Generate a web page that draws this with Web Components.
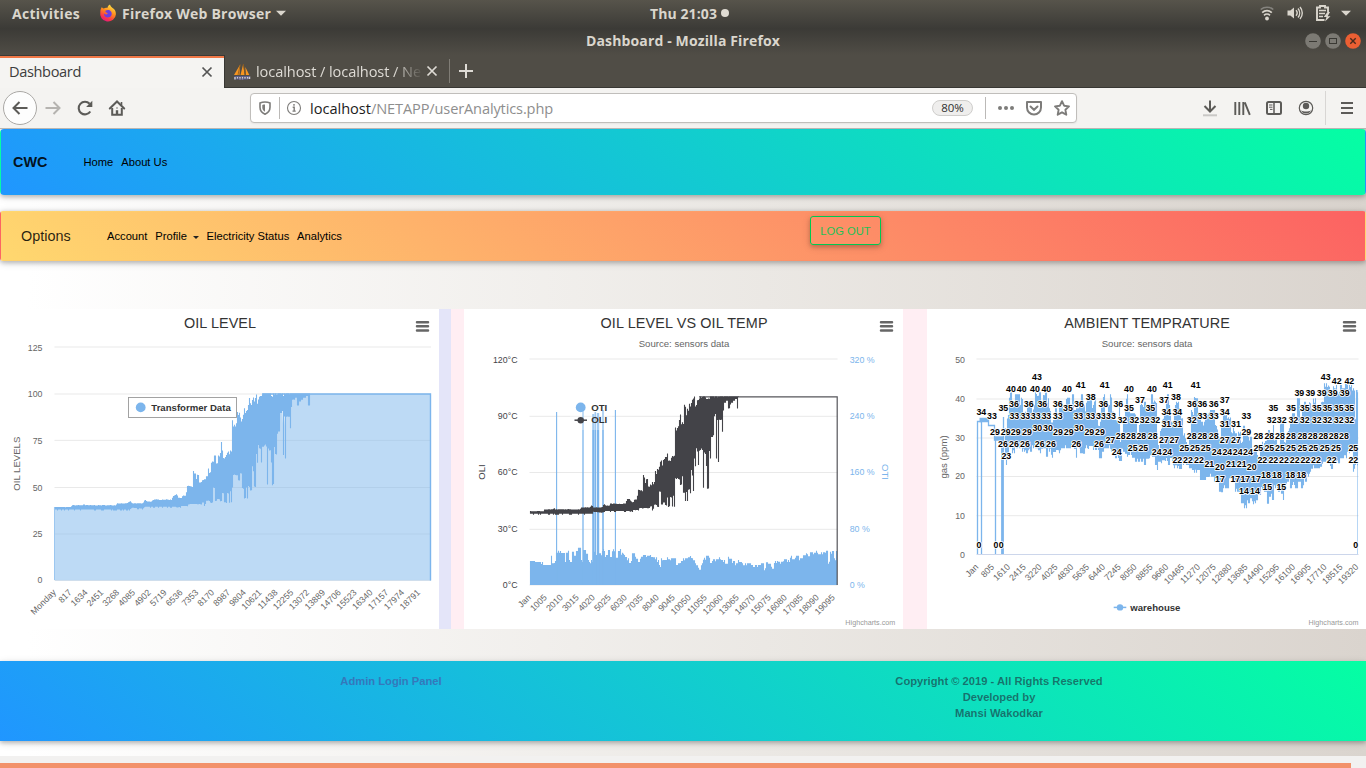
<!DOCTYPE html>
<html lang="en">
<head>
<meta charset="utf-8">
<title>Dashboard</title>
<style>
html,body{margin:0;padding:0;height:100%;overflow:hidden}
body{font-family:"Liberation Sans",Arial,sans-serif;font-size:11.2px;color:#000}
</style>
</head>
<body>
<desktop-shell></desktop-shell>
<script>
const define = (name, css, html, setup) => {
  const tpl = document.createElement('template');
  tpl.innerHTML = '<style>' + css + '</style>' + html;
  customElements.define(name, class extends HTMLElement {
    connectedCallback() {
      if (this.shadowRoot) return;
      this.attachShadow({mode: 'open'}).appendChild(tpl.content.cloneNode(true));
      if (setup) setup.call(this, this.shadowRoot);
    }
  });
};

/* Text spaced to an exact width */
define('fit-text', ':host{display:block;white-space:nowrap;flex:none;line-height:20px}span{display:inline-block}', '<span><slot></slot></span>', function (root) {
  const w = +this.getAttribute('w');
  const s = root.querySelector('span');
  const n = this.textContent.length;
  const nat = s.getBoundingClientRect().width;
  s.style.letterSpacing = ((w - nat) / n) + 'px';
  this.style.width = w + 'px';
});

const ICONS = {
  back: '<path d="M17.500 10H3.500M9.500 4 3.500 10l6 6" stroke-width="2"/>',
  forward: '<path d="M2.500 10h14M10.500 4l6 6-6 6" stroke-width="2"/>',
  reload: '<path d="M15.300 13.500A6.300 6.300 0 1 1 14.600 5.800" stroke-width="2.100"/><path d="M17.300 2.800v6.200h-6.200z" fill="currentColor" stroke="none"/>',
  home: '<path d="M2.800 10.500 10 3.500l7.200 7" stroke-width="2" stroke-linecap="round"/><path d="M5.200 10v6.800h9.600V10" stroke-width="2"/><path d="M14.500 4v3" stroke-width="1.600"/><path d="M10 12.200V17" stroke-width="2.400"/><path d="M10 9.500v1" stroke-width="1.500"/>',
  shield: '<path d="M10 4c2 0 3.700.4 5 1v4.300c0 3.200-2 5.600-5 6.900-3-1.300-5-3.700-5-6.900V5c1.300-.6 3-1 5-1z" stroke-width="1.600"/><path d="M10 6.500c-1 0-1.800.1-2.700.4v2.600c0 1.900 1 3.300 2.700 4.300z" fill="currentColor" stroke="none"/>',
  info: '<circle cx="10" cy="10" r="6.500" stroke-width="1.100"/><path d="M8.700 9.200h1.500v3.600M8.500 13.100h3.200M10 6v1.700" stroke-width="1.400"/>',
  dots: '<g fill="currentColor" stroke="none"><circle cx="4" cy="10" r="2"/><circle cx="10" cy="10" r="2"/><circle cx="16" cy="10" r="2"/></g>',
  pocket: '<path d="M3 4h14v5.500a7 7 0 0 1-14 0z" stroke-width="2" stroke-linejoin="round"/><path d="m6.500 8.500 3.500 3.300 3.500-3.300" stroke-width="2" stroke-linecap="round"/>',
  star: '<path d="m10 3.200 2.100 4.500 4.900.7-3.600 3.400.9 4.900-4.300-2.400-4.300 2.400.9-4.900L3 8.400l4.900-.7z" stroke-width="1.900" stroke-linejoin="round"/>',
  download: '<path d="M10 2.500v11M4.500 8l5.500 5.500L15.500 8" stroke-width="2"/><path d="M3 17.300h14" stroke="#c9c8c6" stroke-width="2"/>',
  library: '<path d="M3.300 4v13M7.300 4v13M11.300 4v13M12.800 4.300l5 12.500" stroke-width="1.900"/>',
  sidebar: '<rect x="3" y="4" width="14" height="12" rx="1.500" stroke-width="2"/><path d="M10 4v12" stroke-width="1.500"/><path d="M5 7h3.500M5 9.200h3.500M6 11.400h2.500" stroke-width="1"/>',
  account: '<circle cx="10" cy="10" r="6.700" stroke-width="1.200"/><circle cx="10" cy="8" r="3.200" fill="currentColor" stroke="none"/><path d="M5 12.300c1.500 1 3 1.300 5 1.300s3.500-.3 5-1.300c-.8 2-2.600 3.300-5 3.300S5.800 14.300 5 12.300z" fill="currentColor" stroke="none"/>',
  menu: '<path d="M4 5h12M4 10h12M4 15h12" stroke-width="2"/>',
  close: '<path d="m5.500 5.500 9 9m0-9-9 9" stroke-width="1.700"/>',
  plus: '<path d="M10 3v14M3 10h14" stroke-width="2"/>',
  wifi: '<path d="M3.700 6.500a10 10 0 0 1 12.600 0" stroke="#85837e" stroke-width="1.600"/><path d="M5.200 9.600a7 7 0 0 1 9.600 0M7 12.300a4.400 4.400 0 0 1 6 0" stroke-width="1.700"/><circle cx="10" cy="15.500" r="1.900" fill="currentColor" stroke="none"/>',
  volume: '<path d="M2.500 7.600h2.800L9 4.400v11.200l-3.700-3.200H2.500z" fill="currentColor" stroke="none"/><path d="M11 7.300a4 4 0 0 1 0 5.400M13 5.500a7 7 0 0 1 0 9M15 4a9 9 0 0 1 0 12" stroke-width="1.400"/>',
  battery: '<path d="M11.500 17H4V4.500h3V3h5v1.500h3V9" stroke-width="1.900"/><path d="M6 7.500h7M6 10.500h6M6 13.500h4" stroke-width="1.300"/><path d="m14.500 9-3.800 5h2.800L12 18.500l5.500-5.300h-2.800L17 9z" fill="currentColor" stroke="none"/>',
  caret: '<path d="M5 7.700h10l-5 5z" fill="currentColor" stroke="none"/>',
  firefox: '<defs><linearGradient id="f" x1=".8" y1="0" x2=".3" y2="1"><stop offset="0" stop-color="#fff04a"/><stop offset=".45" stop-color="#ff8a1d"/><stop offset=".8" stop-color="#f8334c"/><stop offset="1" stop-color="#e31587"/></linearGradient></defs><path d="M9.300 5C10 3 11 2 12 1.600c.3 1.700 1.500 2.300 2.600 3.500 2 .8 3.300 3.300 3.300 6.100A7.900 7.900 0 1 1 2.300 9c0-2 .7-3.700 1.700-5 .3 1 .9 1.400 1.700 1.500C7 4.800 8.300 4.700 9.300 5z" fill="url(#f)" stroke="none"/><path d="M7.800 7.600c2-1 4.500-.6 5.500 1.500 1.200 2.700-.5 5.500-3.400 5.500-2.600 0-4.200-2-4-4 .7.900 1.700 1.100 2.700.9 1.300-.3 1.500-1.300.3-1.700-1.500-.3-2-1.200-1.100-2.200z" fill="#6b3ee0" stroke="none"/>',
  mysql: '<path d="M2 14 8.200 3.500 7.500 14zM8.500 14l2.700-11 1.300 11zM13.300 6l4 8h-3.300z" fill="#f79521" stroke="none"/><path d="M8.200 3.500 6 14M11.200 3l2.300 11" stroke="#8a5a20" stroke-width=".8"/><path d="M3 16v2.500M5.500 15v3M8 16v2.500M10.500 15v3.500M13 15.500v2.500M15.500 15v3M17.500 15.500V18" stroke="#c9c9e0" stroke-width="1.500"/><path d="M2.500 15.500h15M4 18h12" stroke="#5a5a90" stroke-width=".9"/>'
};
define('ui-icon', ':host{display:block;flex:none;width:20px;height:20px}svg{display:block;width:20px;height:20px}', '<svg viewBox="0 0 20 20" fill="none" stroke="currentColor"></svg>', function (root) {
  root.querySelector('svg').innerHTML = ICONS[this.getAttribute('name')];
});

define('system-bar', `
:host{display:flex;align-items:center;height:28px;background:linear-gradient(#57544b,#3c3b37);color:#dad6cd;
 font:700 14px "Open Sans","Noto Sans",sans-serif;box-sizing:border-box;padding-left:12px}
.dot{width:8px;height:8px;border-radius:50%;background:#dfdbd2;margin:-2px 0 0 4px;flex:none}
fit-text{margin-top:-1px}ui-icon{color:#dad6cd;margin-top:-2px}`,
`<fit-text w="68">Activities</fit-text><ui-icon name="firefox" style="margin-left:18px"></ui-icon><fit-text w="149" style="margin-left:4px">Firefox Web Browser</fit-text>
<ui-icon name="caret" style="margin-left:0"></ui-icon><fit-text w="67" style="margin-left:359px">Thu 21:03</fit-text><i class="dot"></i>
<ui-icon name="wifi" style="margin-left:528px"></ui-icon><ui-icon name="volume" style="margin-left:8px"></ui-icon><ui-icon name="battery" style="margin-left:8px"></ui-icon><ui-icon name="caret" style="margin-left:3px"></ui-icon>`);

define('title-bar', `
:host{display:grid;grid-template-columns:1fr auto 1fr;align-items:center;height:27px;background:linear-gradient(#3b3a36,#504d46);color:#dad6cd;font:700 14px "Open Sans","Noto Sans",sans-serif;box-sizing:border-box;padding-bottom:2px}
.b{display:flex;justify-content:flex-end;gap:4px;padding-right:5px}
.b svg{width:16px;height:16px;display:block}`,
`<span></span><fit-text w="194">Dashboard - Mozilla Firefox</fit-text><div class="b">
<svg viewBox="0 0 16 16"><circle cx="8" cy="8" r="7.800" fill="#7c7a74"/><path d="M4 8.500h8" stroke="#3a3934"/></svg>
<svg viewBox="0 0 16 16"><circle cx="8" cy="8" r="7.800" fill="#7c7a74"/><rect x="4.500" y="5.500" width="7" height="5" fill="none" stroke="#3a3934"/></svg>
<svg viewBox="0 0 16 16"><circle cx="8" cy="8" r="7.800" fill="#ec5f33"/><path d="m5.300 5.300 5.400 5.400m0-5.400-5.400 5.400" stroke="#4a2a1c" stroke-width="1.400"/></svg></div>`);

define('tab-strip', `
:host{display:flex;height:33px;background:#504d46;font:14.6px "Open Sans","Noto Sans",sans-serif;box-sizing:border-box}
.on{width:224px;box-sizing:border-box;border-top:2px solid #f07746;background:#f5f4f2;color:#3d3d3d;display:flex;align-items:center;margin-top:1px;padding:0 0 2px 9px;box-shadow:0 -1px #3b3a36}
.on fit-text{margin-top:-2px}
.rest{flex:1;display:flex;align-items:center;border-bottom:1px solid #383733;border-left:1px solid #383733;color:#dedbd5;padding-left:7px}
.rest fit-text{-webkit-mask-image:linear-gradient(90deg,#000 84%,transparent 101%);mask-image:linear-gradient(90deg,#000 84%,transparent 101%)}
.sep{width:1px;height:24px;background:#807d76;margin-left:7px}`,
`<div class="on"><fit-text w="72">Dashboard</fit-text><ui-icon name="close" style="margin-left:116px;color:#555"></ui-icon></div>
<div class="rest"><ui-icon name="mysql"></ui-icon><fit-text w="165" style="margin-left:4px">localhost / localhost / Ne</fit-text><ui-icon name="close" style="margin-left:1px"></ui-icon><i class="sep"></i><ui-icon name="plus" style="margin-left:6px"></ui-icon></div>`);

define('nav-toolbar', `
:host{display:flex;align-items:center;height:41px;background:#f4f3f1;border-bottom:1px solid #b9b6b2;box-sizing:border-box;color:#5c5b58;font:14.6px "Open Sans","Noto Sans",sans-serif;padding-left:3px}
.back{width:32px;height:32px;border:1px solid #aaa8a5;border-radius:50%;background:#fdfdfd;display:grid;place-items:center;flex:none}
.url{display:flex;align-items:center;box-sizing:border-box;width:827px;height:30px;background:#fff;border:1px solid #c0bebb;border-radius:4px;margin-left:123px;padding-left:4px;color:#7d7c7a;box-shadow:0 1px 2px rgba(0,0,0,.06)}
.url>ui-icon[name=info]{margin-left:4px}
.v{width:1px;height:22px;background:#bbb9b7}
.zoom{box-sizing:border-box;width:41px;height:16px;border:1px solid #cfcecc;border-radius:9px;background:#efeeed;color:#2e2e2e;font-size:11.5px;line-height:14px;text-align:center;margin-left:379px}
.host{color:#1c1c1c}.path{color:#8e8e8e}
.tools{display:flex;align-items:center;gap:12px;margin-left:123px}`,
`<div class="back"><ui-icon name="back"></ui-icon></div><ui-icon name="forward" style="margin-left:6px;color:#b5b3b0"></ui-icon><ui-icon name="reload" style="margin-left:12px"></ui-icon><ui-icon name="home" style="margin-left:12px"></ui-icon>
<div class="url"><ui-icon name="shield"></ui-icon><i class="v" style="margin-left:4px"></i><ui-icon name="info"></ui-icon><fit-text class="host" w="61" style="margin-left:6px">localhost</fit-text><fit-text class="path" w="182">/NETAPP/userAnalytics.php</fit-text>
<div class="zoom">80%</div><i class="v" style="margin-left:12px"></i><ui-icon name="dots" style="margin-left:10px"></ui-icon><ui-icon name="pocket" style="margin-left:8px"></ui-icon><ui-icon name="star" style="margin-left:8px"></ui-icon></div>
<div class="tools"><ui-icon name="download"></ui-icon><ui-icon name="library"></ui-icon><ui-icon name="sidebar"></ui-icon><ui-icon name="account"></ui-icon></div><i class="v" style="height:34px;margin-left:9px;background:#d8d6d4"></i><ui-icon name="menu" style="margin-left:11px"></ui-icon>`);

const SHADOW = 'box-shadow:0 1.6px 4px rgba(0,0,0,.2),0 1.6px 8px rgba(0,0,0,.14);';
define('site-nav', `
:host{display:flex;align-items:center;box-sizing:border-box;height:66px;border:1px solid transparent;border-radius:4px;background-image:linear-gradient(40deg,#2096ff,#05ffa3);${SHADOW}padding-left:12px}
b{font-size:14.4px;color:rgba(0,0,0,.9);width:70.4px}nav{display:flex;gap:8px}`,
`<b>CWC</b><nav><span>Home</span><span>About Us</span></nav>`);
define('option-nav', `
:host{display:flex;align-items:center;box-sizing:border-box;height:50px;border:1px solid transparent;border-radius:3px;background-image:linear-gradient(40deg,#ffd86f,#fc6262);${SHADOW}padding-left:20px;margin-top:16px}
b{font-weight:400;font-size:14.4px;color:rgba(0,0,0,.85);width:86px}nav{display:flex;gap:7.800px;width:703px}
.c{display:inline-block;border:3px solid transparent;border-top-color:#222;border-bottom:0;margin-left:5.800px;vertical-align:1.500px}
.out{align-self:flex-start;margin-top:4px;box-sizing:border-box;width:71px;height:29px;border:1.600px solid #00c851;border-radius:3px;color:#1fbf55;display:grid;place-items:center;box-shadow:0 2px 4px rgba(0,0,0,.18),0 2px 8px rgba(0,0,0,.13)}`,
`<b>Options</b><nav><span>Account</span><span>Profile<i class="c"></i></span><span>Electricity Status</span><span>Analytics</span></nav><div class="out">LOG OUT</div>`);
define('site-footer', `
:host{display:grid;grid-template-columns:782px 434px;box-sizing:border-box;height:80px;margin-top:32px;padding-top:12px;background:linear-gradient(40deg,#2096ff,#05ffa3);${SHADOW}font-weight:700;line-height:16px;text-align:center}
a{color:#3478bb}p{margin:0;color:rgba(30,30,50,.58)}`,
`<a>Admin Login Panel</a><p>Copyright © 2019 - All Rights Reserved<br>Developed by<br>Mansi Wakodkar</p>`);

/* ---- chart helpers ---- */
let seed = 7;
const rnd = () => (seed = (seed * 16807) % 2147483647) / 2147483647;
const interp = (p, x) => {
  for (let i = 1; i < p.length; i++) if (x <= p[i][0]) {
    const a = p[i - 1], b = p[i];
    return a[1] + (b[1] - a[1]) * Math.max(0, x - a[0]) / (b[0] - a[0]);
  }
  return p[p.length - 1][1];
};
const near = (p, x) => p.reduce((m, q) => Math.abs(q[0] - x) < Math.abs(m[0] - x) ? q : m)[1];
const parse = (s, fx, fy) => s.trim().split(/\s+/).map(t => t.split(':').map(Number)).map(([a, b]) => [fx(a), fy(b)]);
const id = v => v;
const txt = (x, y, t, o = '') => `<text x="${x}" y="${y}" ${o}>${t}</text>`;
const slant = (labels, x0, step, y) => labels.map((l, i) => `<text text-anchor="end" transform="translate(${(x0 + step * i).toFixed(1)} ${y}) rotate(-45)">${l}</text>`).join('');
const grid = (ys, x1, x2) => ys.map(y => `<path d="M${x1} ${y}H${x2}" stroke="#e6e6e6" stroke-width=".9"/>`).join('');
const burger = x => `<path d="M${x} 322.200h11M${x} 326.300h11M${x} 330.400h11" stroke="#666" stroke-width="2.500" stroke-linecap="round"/>`;
const steps = (first, d, n) => [first, ...Array.from({length: n}, (_, i) => d * (i + 1))];
const OIL_TOP = parse('54:39 71:39 72:40 83:40 84:41 85:40 116:40 117:41 128:41 129:42 131:42 132:41 143:41 145:43 147:42 152:42 153:43 172:43 173:45 177:46 178:44 185:45 186:47 188:50 191:50 192:50 193:58.5 195:57 196:54 198:56 200:52 203:53 205:54 207:55 208:60 210:58 211:62 213:63 215:66 217:63 218:66 220:67 221:73 222:69 224:65 226:66 228:68 231:69 232:86 233:83 236:83 238:89 241:86 243:87 244:94 246:91 248:93 250:96 252:95 254:97 256:99 258:96 260:98 262:100 431:100', id, id);
const OIL_LOW = parse('54:38 130:38 132:39 143:38.5 145:39.500 176:39.500 177:39 184:40 192:41 200:41 203:42 204:40 205:41 207:43 212:42 214:50 216:43 218:44 221:43 223:47 225:42 228:47 229:42 230:48 231:42 232:50 233:57 237:57 239:54 241:58 243:50 245:45 246:50 247:45 249:51 251:49 252:62 253:59 255:51 256:68 257:64 258:73 260:71 261:64 262:72 265:73 266:72 267:52 268:71 270:70 271:64 272:52 273:52 274:72 276:68 277:79 279:80 280:90 281:90 282:91 283:68 284:88 285:65.5 286:88 289:88 290:82 291:93 293:97 296:98 298:94 300:96 302:97 304:98 307:99 309:94 310:100 431:100', id, id);
const band = (map, yf, x0, x1) => {
  let d = '';
  for (let x = x0; x < x1; x++) {
    const u = map(x + .5);
    if (u > 310) break;
    const flat = u < 180;
    const t = flat ? interp(OIL_TOP, u) : near(OIL_TOP, u), l = flat ? interp(OIL_LOW, u) : near(OIL_LOW, u);
    const j = (rnd() - .5) * Math.min(4, (t - l) * .1);
    const drop = flat ? (rnd() > .7 ? 1 : 0) : Math.abs(j);
    d += `M${x + .5} ${(yf(l) + drop).toFixed(1)}V${(yf(Math.min(100, t + j)) - .6).toFixed(1)}`;
  }
  return d;
};
const CHART_CSS = ':host{display:block;flex:none;width:439px;height:320px;background:#fff}svg{display:block;width:439px;height:320px;font-family:"Liberation Sans",Arial,sans-serif;font-size:8.8px;fill:#666}.t{font-size:14.4px;fill:#333;text-anchor:middle}.s{font-size:9.6px;text-anchor:middle}.e{text-anchor:end}.l{font-size:9.6px;font-weight:700;fill:#333}.h{font-size:7.2px;fill:#999;text-anchor:end}.d{font-weight:700;fill:#000;text-anchor:middle;stroke:#fff;stroke-width:1.7px;paint-order:stroke;stroke-linejoin:round}.o{fill:#7cb5ec}.k{fill:#434348}';

define('oil-level-chart', CHART_CSS, '<svg viewBox="0 309 439 320"></svg>', function (root) {
  const y = v => 580.4 - v * 1.864;
  let area = 'M55 580.400';
  for (let x = 55; x <= 431; x++) area += `L${x} ${(y(x < 308 ? (interp(OIL_LOW, x) + interp(OIL_TOP, x)) / 2 : 100)).toFixed(1)}`;
  area += 'V580.4z';
  root.querySelector('svg').innerHTML =
    txt(220, 328, 'OIL LEVEL', 'class="t" textLength="72"') + burger(417) +
    grid([347, 394, 440.4, 487.5, 534, 580.4], 54.500, 431) +
    `<path d="${area}" fill="#7cb5ec" fill-opacity=".5"/>` +
    `<path d="${band(id, y, 54, 310)}" stroke="#7cb5ec" stroke-width="1.100"/><path d="M262 394H430.500V580.400" fill="none" stroke="#7cb5ec" stroke-width="1.400" /><path d="M54.500 508V580" stroke="#9cc7f0"/>` +
    [[125, 351], [100, 397], [75, 443.500], [50, 491], [25, 537], [0, 583]].map(([t, b]) => txt(42.500, b, t, 'class="e"')).join('') +
    `<text class="s" transform="translate(20 463.700) rotate(-90)">OIL LEVELS</text>` +
    slant(steps('Monday', 817, 23), 56.500, 15.830, 593) +
    `<rect x="128.500" y="397.500" width="108" height="20" fill="#fff" stroke="#999" stroke-width=".9"/><circle cx="140.700" cy="407.400" r="4.900" fill="#7cb5ec"/>` +
    txt(151.300, 411, 'Transformer Data', 'class="l"');
});

define('oil-temp-chart', CHART_CSS, '<svg viewBox="464 309 439 320"></svg>', function (root) {
  const y = v => 585.2 - v * 1.882, fy = v => 305 + v / 3;
  const a = parse('210:768 240:771 255:780 272:780 274:752 278:775 285:768 290:737 312:738 316:765 322:737 330:765 340:740 345:752 350:738 360:728 366:765 372:735 382:740 388:765 392:775 396:765 400:740 410:750 420:745 432:732 440:750 447:735 452:750 462:733 470:752 480:732 485:743 490:740 495:750 505:760 510:768 520:745 530:755 537:765 545:755 555:750 565:752 575:750 585:757 595:765 600:780 605:760 615:765 625:757 635:760 645:760 650:780 655:775 665:768 675:760 690:757', v => 460 + v / 3, fy)
    .concat(parse('1:753 10:760 20:775 30:788 38:775 42:758 55:752 65:768 75:763 88:757 98:765 110:770 120:755 130:768 138:775 150:765 160:775 175:775 190:780 205:780 220:775 224:790 230:772 240:770 247:785 255:768 270:770 285:763 295:765 303:752 310:757 320:752 335:760 345:745 355:748 365:742 380:737 390:742 400:742 412:737 418:770 422:740 430:738 436:760 440:738', v => 690 + v / 3, fy));
  let cols = '';
  for (let x = 530; x < 837; x++) cols += `M${x + .5} 585V${(near(a, x + .5) + (x > 540 ? (rnd() > .6 ? 2 : 0) : 0)).toFixed(1)}`;
  const line = (x, t, w) => `<path d="M${x} 585V${t}" stroke="#7cb5ec" stroke-width="${w}"/>`;
  const map = x => 54.5 + (x - 530) * 376.5 / 307.5;
  root.querySelector('svg').innerHTML =
    txt(684, 328, 'OIL LEVEL VS OIL TEMP', 'class="t" textLength="167"') + txt(684, 347, 'Source: sensors data', 'class="s"') + burger(881) +
    grid([359, 416.300, 472.500, 529.300, 585], 529.500, 837.500) +
    `<path d="${cols}" stroke="#7cb5ec" stroke-width="1.100"/>` +
    line(556.600, 412, 1.100) + line(583, 411, 1.300) + line(593.300, 414, 2.200) + line(595.300, 412, 1.600) + line(598, 413, 2.400) + line(603, 410, 1.600) + line(615.400, 410, 1.100) +
    `<path d="${band(map, y, 530, 740)}" stroke="#434348" stroke-width="1.100"/><path d="M699 396.900H837.200V585" fill="none" stroke="#434348" stroke-width="1.200" stroke-opacity=".9"/>` +
    '<rect x="570" y="400" width="42" height="30" fill="#fff" fill-opacity=".3"/>' +
    '<circle cx="580.700" cy="407.400" r="4.900" fill="#7cb5ec"/><path d="M574.500 420.200h12.500" stroke="#434348" stroke-width="1.500"/><circle cx="580.700" cy="420.200" r="3.200" fill="#434348"/>' +
    txt(591.300, 411, 'OTI', 'class="l"') + txt(591.300, 423.300, 'OLI', 'class="l"') +
    [['120°C', 363], ['90°C', 419], ['60°C', 475], ['30°C', 532], ['0°C', 588]].map(([t, b]) => txt(517.500, b, t, 'class="e k"')).join('') +
    [['320 %', 363], ['240 %', 419], ['160 %', 475], ['80 %', 532], ['0 %', 588]].map(([t, b]) => txt(849.700, b, t, 'class="o"')).join('') +
    '<text class="s k" transform="translate(485 472) rotate(-90)">OLI</text><text class="s o" transform="translate(882 472) rotate(90)">OTI</text>' +
    slant(steps('Jan', 1005, 19), 531.500, 16, 598) + txt(895.300, 625, 'Highcharts.com', 'class="h"');
});

define('ambient-chart', CHART_CSS, '<svg viewBox="927 309 439 320"></svg>', function (root) {
  const fy = v => 305 + v / 3, fa = v => 925 + v / 3, fb = v => 1140 + v / 3;
  const top = parse('237:395 243:370 249:330 252:275 257:262 262:280 268:300 274:268 282:268 286:300 290:278 296:325 303:320 308:300 312:290 318:298 322:330 328:300 334:262 344:262 349:300 356:270 365:262 368:280 375:310 378:340 385:345 392:310 398:330 405:300 412:290 418:310 425:278 435:278 437:310 444:268 450:315 457:310 466:290 470:268 475:300 482:310 486:280 490:268 497:285 505:300 510:280 515:330 523:350 530:290 537:268 545:330 550:300 557:268 562:320 570:345 580:345 582:300 590:400 595:345 602:310 606:268 612:320 620:325 632:325 640:400 645:345 648:290', fa, fy)
    .concat(parse('1:300 10:300 15:290 22:310 28:310 35:268 42:280 48:290 52:400 58:420 62:370 68:340 75:310 82:268 90:300 98:350 105:300 112:290 120:310 125:340 132:385 138:400 145:440 150:400 155:315 160:330 166:268 172:280 178:320 190:350 197:340 205:315 222:315 230:360 238:400 245:350 250:320 262:330 270:330 275:370 282:365 290:385 300:380 305:410 315:362 320:375 330:395 340:440 345:430 355:450 362:430 370:410 375:405 385:375 395:385 400:360 405:400 415:420 422:350 428:340 435:400 445:370 452:325 460:325 468:350 475:280 482:330 488:300 495:290 502:310 508:290 515:310 522:280 532:300 540:310 548:290 555:235 565:240 575:260 585:240 595:260 602:240 612:250 620:235 630:240 642:250 645:335 650:255 654:255', fb, fy));
  const low = parse('237:435 240:465 245:480 249:465 255:430 267:445 272:430 285:430 297:440 305:445 318:440 325:430 335:430 345:445 352:440 358:430 365:455 370:430 375:440 382:458 388:450 395:435 405:445 410:430 420:430 440:430 450:432 454:458 458:430 470:445 475:455 482:430 495:432 515:435 527:460 532:440 540:430 550:430 560:440 565:460 575:460 580:468 590:468 592:440 605:455 615:450 625:458 635:470', fa, fy)
    .concat(parse('1:470 10:470 15:480 22:470 30:460 40:455 48:480 52:495 58:470 70:475 80:468 87:480 95:468 105:490 125:492 128:480 135:470 142:480 150:490 160:495 165:503 175:495 185:525 205:525 210:515 220:515 225:530 235:530 240:560 248:562 252:550 265:550 270:520 283:530 288:560 300:560 308:595 317:610 325:595 332:580 340:598 352:595 358:570 365:555 375:560 385:605 390:575 400:585 405:550 418:560 425:575 430:585 435:545 445:530 452:550 460:540 470:550 480:530 488:550 495:530 505:515 515:500 525:490 535:490 545:485 552:470 565:475 575:492 585:470 595:475 605:460 615:460 625:440 630:445 637:440 641:500 648:480 654:490', fb, fy));
  let d = '';
  for (let x = 1004; x < 1358; x++) d += `M${x + .5} ${(near(low, x + .5) - (rnd() > .7 ? 3 : 0)).toFixed(1)}V${(near(top, x + .5) + (rnd() > .6 ? 5 * rnd() : 0)).toFixed(1)}`;
  const A = [[43,216,'336'],[40,252,'258 290 330 364 426 612'],[41,240,'467 539'],[38,276,'497'],[37,285,'645'],[36,297,'267 311 352 398 462 535 580'],[35,309,'235 429 612'],[34,321,'169'],[33,333,'201 268 301 332 364 398 460 496 528 558'],[32,345,'592 628 659'],[30,369,'337 369 462'],[29,381,'210 242 272 306 399 431 493 525'],[28,393,'587 618 649'],[27,405,'556'],[26,417,'234 267 300 344 378 454 522'],[25,429,'623 655'],[24,441,'575'],[23,453,'244'],[0,720,'162 213 229']];
  const B = [[43,216,'557'],[42,228,'590 628'],[41,240,'83 167'],[40,252,'36'],[39,264,'478 511 545 578 614'],[38,276,'108'],[37,285,'72 254'],[36,297,'156 187 221'],[35,309,'31 400 453 494 530 562 596 628'],[34,321,'79 112 254'],[33,333,'187 221 319'],[32,345,'46 155 395 425 460 494 530 562 596 628'],[31,357,'79 112 254 288'],[29,381,'319'],[28,393,'38 155 187 221 355 388 420 453 487 518 550 581 612'],[27,405,'72 103 254 288'],[25,429,'133 165 197 355 388 420 453 487 520 554 588 640'],[24,441,'50 82 230 262 293 324'],[22,465,'112 144 177 367 400 432 464 496 528 575 640'],[21,477,'208 273 305'],[20,486,'240 335'],[18,510,'378 411 451 484'],[17,522,'240 286 316 348'],[15,546,'382 424'],[14,558,'312 345'],[0,720,'647']];
  const lab = (L, f) => L.map(([t, yy, xs]) => xs.split(' ').map(x => txt(f(+x).toFixed(1), (fy(yy) + 3.1).toFixed(1), t, 'class="d"')).join('')).join('');
  root.querySelector('svg').innerHTML =
    txt(1147, 328, 'AMBIENT TEMPRATURE', 'class="t"') + txt(1147, 347, 'Source: sensors data', 'class="s"') + burger(1344) +
    grid([359, 399, 438, 476.500, 515.700], 976.500, 1358.500) + '<path d="M976.500 554.500H1358.500" stroke="#ccd6eb"/>' +
    `<path d="${d}" stroke="#7cb5ec" stroke-width="1.100"/>` +
    '<g fill="none" stroke="#7cb5ec"><path d="M977.500 554V421.500H981.500V554" stroke-width="1.300"/><path d="M979.500 420H988.500" stroke-width="4.500"/><path d="M988.500 419V425.500H994.500V431V440H995.500V554" stroke-width="1.300"/><path d="M995 438.500H1003" stroke-width="4.500"/><path d="M1002.500 440V554" stroke-width="2.800"/><path d="M1003.500 417V450" stroke-width="1.300"/><path d="M1357.500 390V554" stroke-width="1" stroke-opacity=".55"/></g>' +
    lab(A, fa) + lab(B, fb) +
    [[50, 363], [40, 402], [30, 441], [20, 479], [10, 519], [0, 558]].map(([t, b]) => txt(965, b, t, 'class="e"')).join('') +
    '<text class="s" transform="translate(947 457) rotate(-90)">gas (ppm)</text>' +
    slant(steps('Jan', 805, 24), 979, 15.830, 567.500) +
    '<path d="M1113.700 607.400h12.600" stroke="#7cb5ec" stroke-width="1.500"/><circle cx="1120" cy="607.400" r="3.200" fill="#7cb5ec"/>' +
    txt(1130.300, 611, 'warehouse', 'class="l"') + txt(1358.500, 625, 'Highcharts.com', 'class="h"');
});

define('chart-row', ':host{display:flex;margin-top:48px;background:#ffeef3;height:320px}i{flex:none;height:320px}',
`<oil-level-chart></oil-level-chart><i style="width:12px;background:#e4e5f9"></i><i style="width:13px"></i><oil-temp-chart></oil-temp-chart><i style="width:24px"></i><ambient-chart></ambient-chart>`);

define('web-page', `:host{display:block;box-sizing:border-box;height:627px;overflow:hidden;background:linear-gradient(90deg,#fff 0%,#fff 2%,#ebe8e4 56%,#dad4ce 100%)}`,
`<site-nav></site-nav><option-nav></option-nav><chart-row></chart-row><site-footer></site-footer>`);
define('scroll-track', ':host{display:block;height:12px;background:#f2f1f0;box-sizing:border-box;padding-top:7px}i{display:block;width:1351px;height:5px;background:#f2916a}', '<i></i>');
define('desktop-shell', ':host{display:flex;flex-direction:column;width:1366px;height:768px;overflow:hidden}',
`<system-bar></system-bar><title-bar></title-bar><tab-strip></tab-strip><nav-toolbar></nav-toolbar><web-page></web-page><scroll-track></scroll-track>`);
</script>
</body>
</html>
